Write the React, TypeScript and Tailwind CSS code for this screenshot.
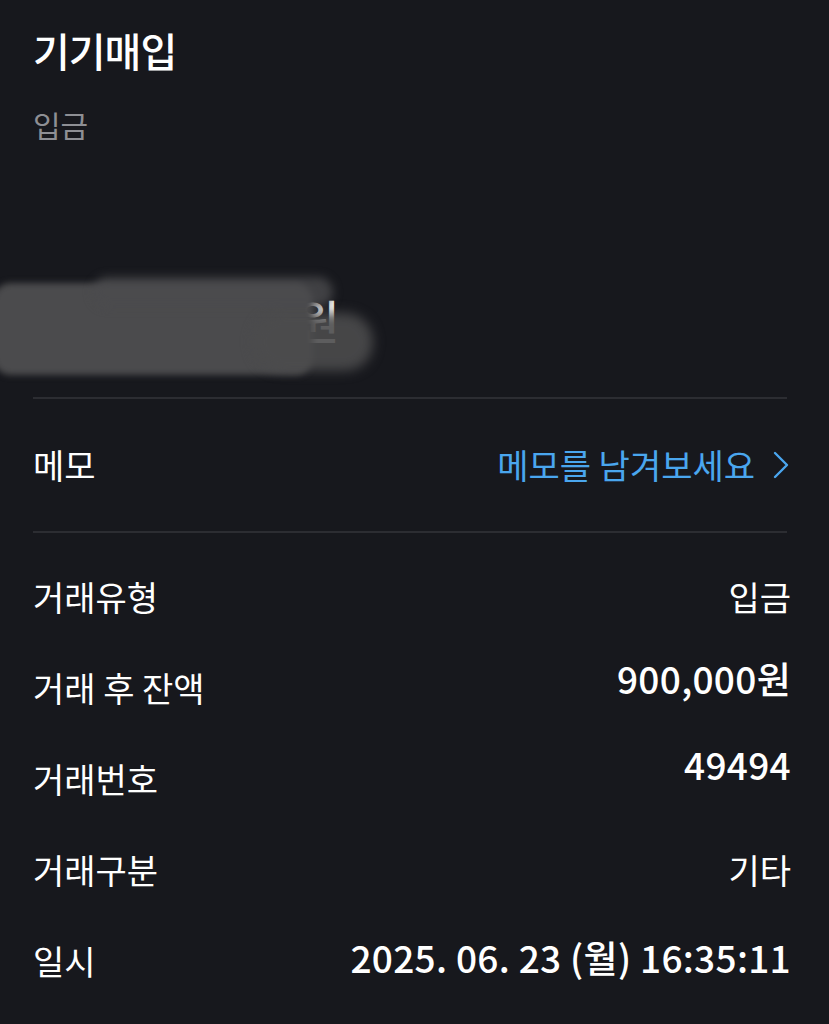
const FONT = { fontFamily: '"Noto Sans CJK KR", "Noto Sans", sans-serif' }

type Row = { label: string; value: string; numeric?: boolean; lift: string }

const ROWS: Row[] = [
  { label: '거래유형', value: '입금', lift: 'mt-0' },
  { label: '거래 후 잔액', value: '900,000원', numeric: true, lift: '-mt-[10px]' },
  { label: '거래번호', value: '49494', numeric: true, lift: '-mt-[15px]' },
  { label: '거래구분', value: '기타', lift: 'mt-0' },
  { label: '일시', value: '2025. 06. 23 (월) 16:35:11', numeric: true, lift: '-mt-[4px]' },
]

export default function App() {
  return (
    <div className="min-h-[1024px] w-full overflow-hidden bg-[#17181d] pl-[33px] pr-[38px] text-white" style={FONT}>
      <h1 className="pt-[24px] text-[40px] font-medium leading-[52px] tracking-tight">기기매입</h1>
      <p className="mt-[28px] text-[30px] leading-[40px] text-[#8e8f94]">입금</p>

      {/* Redacted amount */}
      <div className="relative mt-[143px] h-[100px]">
        <span className="absolute left-[264px] top-[2px] text-[46px] font-medium leading-[60px]">원</span>
        <div className="pointer-events-none absolute -left-[40px] top-[-4px] h-[92px] w-[320px] rounded-[18px] bg-[#4b4b4d] blur-[3px]" />
        <div className="pointer-events-none absolute left-[220px] top-[26px] h-[58px] w-[120px] rounded-[28px] bg-[#4b4b4d]/90 blur-[6px]" />
        <div className="pointer-events-none absolute left-[60px] top-[-10px] h-[30px] w-[240px] rounded-full bg-[#4b4b4d]/80 blur-[5px]" />
      </div>

      <div className="mr-[4px] mt-[10px] h-[2px] bg-[#2c2d32]" />

      <div className="flex h-[132px] items-center justify-between">
        <span className="text-[34px] leading-[44px]">메모</span>
        <span className="flex items-center gap-[18px] text-[34px] leading-[44px] text-[#4aa6ee]">
          메모를 남겨보세요
          <svg width="16" height="28" viewBox="0 0 16 28" fill="none" stroke="currentColor" strokeWidth="2.4" strokeLinecap="round" strokeLinejoin="round" className="mr-[2px]">
            <polyline points="2,2 14,14 2,26" />
          </svg>
        </span>
      </div>

      <div className="mr-[4px] h-[2px] bg-[#2c2d32]" />

      <div className="flex flex-col gap-[47px] pt-[42px]">
        {ROWS.map((r) => (
          <div key={r.label} className="flex items-start justify-between">
            <span className="text-[34px] leading-[44px]">{r.label}</span>
            <span
              className={`${r.lift} leading-[44px] ${
                r.numeric ? 'text-[37px] font-medium tracking-[0.3px]' : 'text-[34px] font-normal'
              }`}
            >
              {r.value}
            </span>
          </div>
        ))}
      </div>
    </div>
  )
}
